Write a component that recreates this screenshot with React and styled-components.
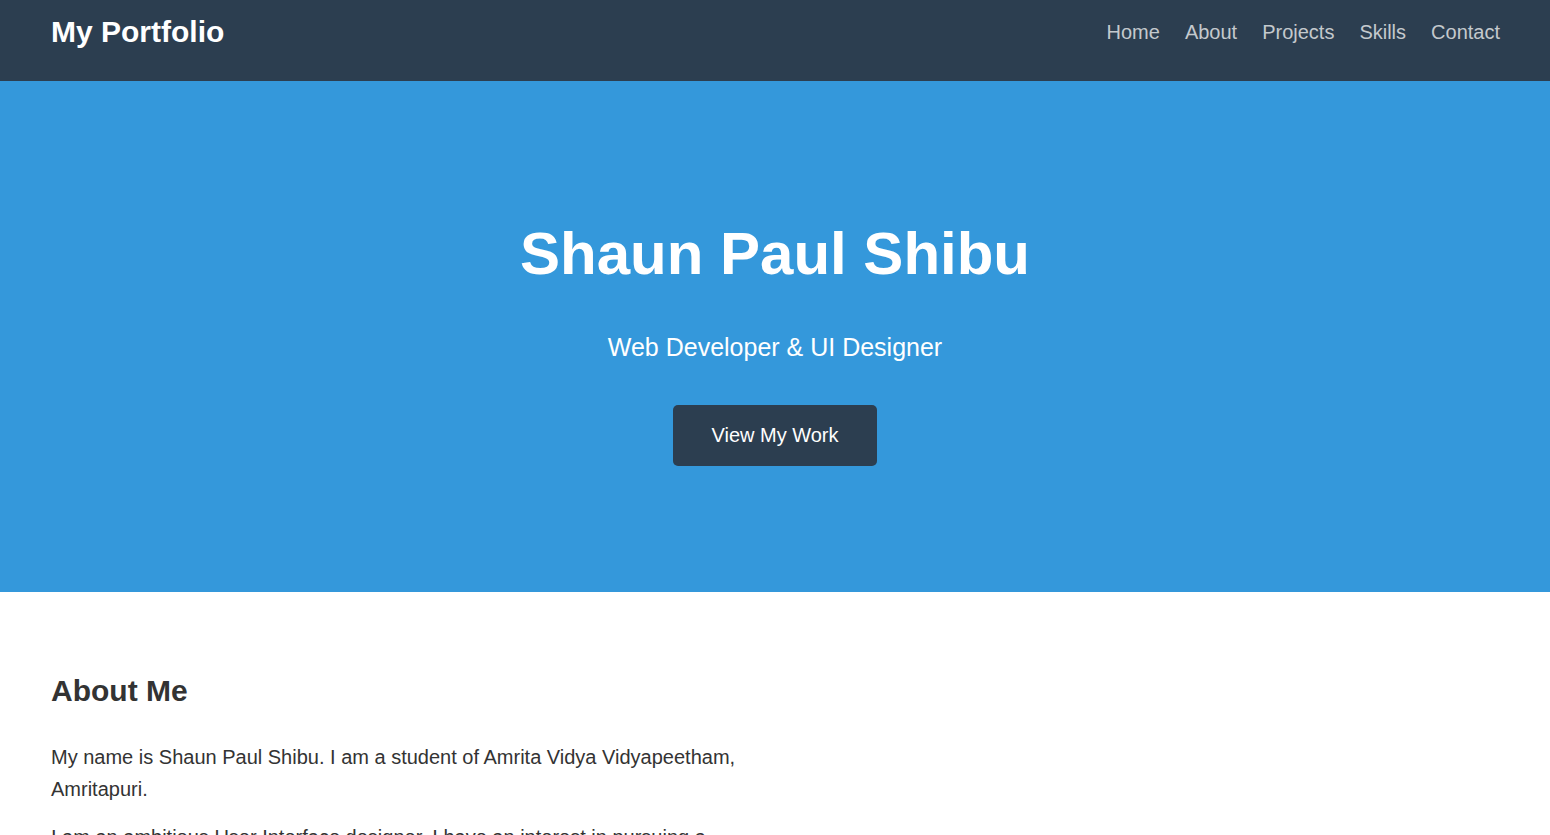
import React from "react";
import styled, { createGlobalStyle } from "styled-components";

const GlobalStyle = createGlobalStyle`
  * {
    box-sizing: border-box;
  }
  body {
    margin: 0;
    font-family: Arial, "Liberation Sans", Helvetica, sans-serif;
    color: #333;
    background: #fff;
  }
`;

const navLinks = ["Home", "About", "Projects", "Skills", "Contact"];

const App = () => {
  return (
    <>
      <GlobalStyle />
      <Header>
        <Logo>My Portfolio</Logo>
        <Nav>
          {navLinks.map((link) => (
            <NavLink key={link} href={`#${link.toLowerCase()}`}>
              {link}
            </NavLink>
          ))}
        </Nav>
      </Header>

      <Hero id="home">
        <HeroTitle>Shaun Paul Shibu</HeroTitle>
        <HeroSubtitle>Web Developer &amp; UI Designer</HeroSubtitle>
        <HeroButton href="#projects">View My Work</HeroButton>
      </Hero>

      <Section id="about">
        <SectionTitle>About Me</SectionTitle>
        <Paragraph>
          My name is Shaun Paul Shibu. I am a student of Amrita Vidya
          Vidyapeetham, Amritapuri.
        </Paragraph>
        <Paragraph>
          I am an ambitious User Interface designer. I have an interest in
          pursuing a career in designing clean and accessible web experiences.
        </Paragraph>
      </Section>
    </>
  );
};

const Header = styled.header`
  height: 81px;
  background: #2c3e50;
  padding: 15px 50px 0 51px;
  display: flex;
  justify-content: space-between;
  align-items: flex-start;
`;

const Logo = styled.h1`
  margin: 0;
  color: #fff;
  font-size: 30px;
  font-weight: bold;
`;

const Nav = styled.nav`
  display: flex;
  gap: 25px;
  margin-top: 6px;
`;

const NavLink = styled.a`
  color: #c4c9cd;
  text-decoration: none;
  font-size: 20px;
`;

const Hero = styled.section`
  height: 511px;
  background: #3498db;
  padding-top: 138px;
  display: flex;
  flex-direction: column;
  align-items: center;
  color: #fff;
`;

const HeroTitle = styled.h2`
  margin: 0 0 45px;
  font-size: 60px;
  font-weight: bold;
`;

const HeroSubtitle = styled.p`
  margin: 0 0 43px;
  font-size: 25px;
`;

const HeroButton = styled.a`
  display: inline-block;
  background: #2c3e50;
  color: #fff;
  text-decoration: none;
  font-size: 20px;
  padding: 19.2px 38.4px;
  border-radius: 5px;
`;

const Section = styled.section`
  padding: 82px 51px;
`;

const SectionTitle = styled.h2`
  margin: 0 0 33px;
  font-size: 30px;
  font-weight: bold;
  color: #333;
`;

const Paragraph = styled.p`
  margin: 0 0 16px;
  max-width: 700px;
  font-size: 20px;
  line-height: 1.6;
  color: #333;
`;

export default App;
